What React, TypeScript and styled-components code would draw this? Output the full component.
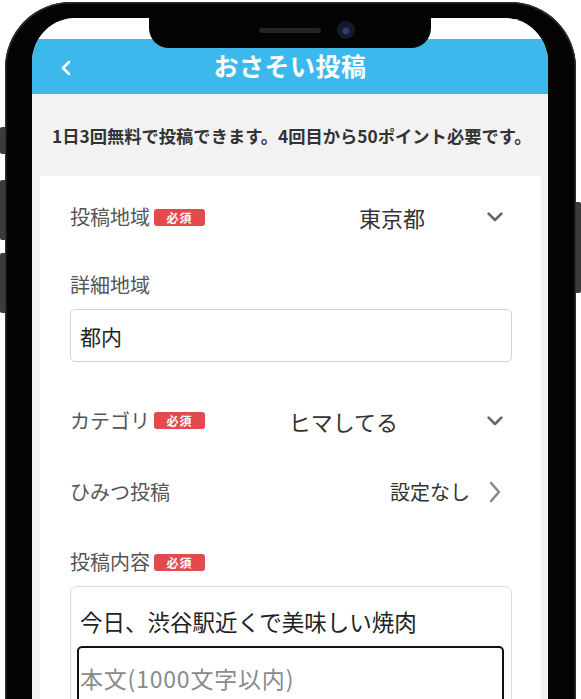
import React from "react";
import styled, { createGlobalStyle } from "styled-components";

const GlobalStyle = createGlobalStyle`
  html, body { margin: 0; padding: 0; background: #ffffff; }
  body {
    font-family: "Noto Sans CJK JP", "Noto Sans", "Liberation Sans", sans-serif;
    overflow: hidden;
  }
  * { box-sizing: border-box; }
`;

const Page = styled.div`
  position: relative;
  width: 581px;
  height: 699px;
  overflow: hidden;
  background: #ffffff;
`;

const SideButton = styled.div<{ $side: "left" | "right"; $top: number; $height: number }>`
  position: absolute;
  ${(p) => (p.$side === "left" ? "left: 0;" : "right: 0;")}
  top: ${(p) => p.$top}px;
  width: 6px;
  height: ${(p) => p.$height}px;
  background: #3b3b3b;
  border-radius: ${(p) => (p.$side === "left" ? "2px 0 0 2px" : "0 2px 2px 0")};
`;

const Device = styled.div`
  position: relative;
  margin: 2px 0 0 5px;
  width: 571px;
  height: 760px;
  padding: 16px 28px 0 27px;
  background: #040404;
  border-radius: 66px 66px 0 0;
  box-shadow: inset 0 0 0 1.5px #2c2c2c;
`;

const Screen = styled.div`
  position: relative;
  width: 516px;
  height: 740px;
  background: #ffffff;
  border-radius: 44px 44px 0 0;
  overflow: hidden;
  display: flex;
  flex-direction: column;
`;

const Notch = styled.div`
  position: absolute;
  top: 0;
  left: 50%;
  transform: translateX(-50%);
  width: 282px;
  height: 30px;
  background: #040404;
  border-radius: 0 0 20px 20px;
  display: flex;
  align-items: center;
  justify-content: flex-start;
  gap: 16px;
  padding-left: 110px;
  z-index: 2;
`;

const Speaker = styled.div`
  width: 62px;
  height: 5px;
  margin-top: -6px;
  border-radius: 3px;
  background: #222325;
`;

const Camera = styled.div`
  width: 18px;
  height: 18px;
  margin-top: -6px;
  border-radius: 50%;
  background: radial-gradient(circle at 50% 55%, #2c3f73 0 3px, #15192a 4px 100%);
`;

const StatusBar = styled.div`
  height: 21px;
  flex: none;
  background: #ffffff;
`;

const Header = styled.header`
  height: 55px;
  flex: none;
  background: #3cb8ec;
  display: grid;
  grid-template-columns: 1fr auto 1fr;
  align-items: center;
`;

const BackButton = styled.div`
  padding-left: 28px;
  display: flex;
  align-items: center;
  padding-top: 3px;
`;

const Title = styled.h1`
  margin: 0 0 3px;
  color: #ffffff;
  font-size: 25px;
  font-weight: 700;
  letter-spacing: 0.5px;
`;

const Notice = styled.div`
  height: 82px;
  flex: none;
  background: #f2f2f3;
  padding-left: 20px;
  display: flex;
  align-items: center;
  color: #333333;
  font-size: 17.3px;
  font-weight: 700;
  white-space: nowrap;
`;

const Body = styled.div`
  flex: 1;
  background: #f2f2f3;
  padding: 0 7px 0 8px;
  display: flex;
`;

const Card = styled.div`
  flex: 1;
  background: #ffffff;
  padding: 6px 29px 0 30px;
  display: flex;
  flex-direction: column;
`;

const Row = styled.div<{ $height: number }>`
  height: ${(p) => p.$height}px;
  display: flex;
  align-items: center;
  flex: none;
`;

const LabelGroup = styled.div`
  display: flex;
  align-items: center;
  gap: 4px;
`;

const Label = styled.span`
  font-size: 20px;
  color: #555555;
  line-height: 28px;
`;

const FieldLabel = styled(LabelGroup)<{ $top: number }>`
  margin-top: ${(p) => p.$top}px;
  height: 28px;
`;

const Badge = styled.span`
  width: 51px;
  height: 17px;
  border-radius: 3px;
  background: #e24a4c;
  color: #ffffff;
  font-size: 12px;
  font-weight: 700;
  display: flex;
  align-items: center;
  justify-content: center;
  letter-spacing: 1px;
`;

const Spacer = styled.div`
  flex: 1;
`;

const Value = styled.span<{ $gap: number; $size?: number }>`
  font-size: ${(p) => p.$size ?? 22}px;
  color: #333333;
  margin-right: ${(p) => p.$gap}px;
  line-height: 30px;
`;

const Icon = styled.span<{ $right: number }>`
  display: flex;
  align-items: center;
  margin-right: ${(p) => p.$right}px;
`;

const TextInput = styled.input`
  margin-top: 10px;
  height: 53px;
  width: 100%;
  border: 1.5px solid #d2d2d2;
  border-radius: 5px;
  padding: 0 0 0 9px;
  font-family: inherit;
  font-size: 21px;
  color: #222222;
  background: #ffffff;
  outline: none;
`;

const AfterInput = styled.div`
  height: 23px;
  flex: none;
`;

const ContentBox = styled.div`
  margin-top: 10px;
  border: 1.5px solid #dadada;
  border-radius: 7px;
  padding: 18px 7px 0 6px;
  flex: 1;
`;

const ContentTitle = styled.div`
  padding-left: 3px;
  font-size: 22.5px;
  line-height: 32px;
  color: #222222;
`;

const TextArea = styled.textarea`
  display: block;
  margin-top: 9px;
  width: 100%;
  height: 120px;
  border: 2.5px solid #111111;
  border-radius: 5px;
  padding: 14px 0 0 1px;
  font-family: inherit;
  font-size: 23px;
  letter-spacing: 0.8px;
  line-height: 32px;
  color: #222222;
  resize: none;
  outline: none;
  background: #ffffff;
  &::placeholder {
    color: #8a8a8a;
  }
`;

const ChevronDown = () => (
  <svg width="16" height="10" viewBox="0 0 16 10">
    <path d="M1.6 1.6 L8 8 L14.4 1.6" fill="none" stroke="#666" strokeWidth="2.6" strokeLinecap="round" strokeLinejoin="round" />
  </svg>
);

const ChevronRight = () => (
  <svg width="12" height="22" viewBox="0 0 12 22">
    <path d="M2 2 L10 11 L2 20" fill="none" stroke="#888" strokeWidth="2.6" strokeLinecap="round" strokeLinejoin="round" />
  </svg>
);

const BackIcon = () => (
  <svg width="12" height="16" viewBox="0 0 12 16">
    <path d="M9 2 L3 8 L9 14" fill="none" stroke="#fff" strokeWidth="2.6" strokeLinecap="round" strokeLinejoin="round" />
  </svg>
);

export default function App() {
  return (
    <>
      <GlobalStyle />
      <Page>
        <SideButton $side="left" $top={127} $height={27} />
        <SideButton $side="left" $top={180} $height={60} />
        <SideButton $side="left" $top={253} $height={60} />
        <SideButton $side="right" $top={202} $height={91} />
        <Device>
          <Screen>
            <Notch>
              <Speaker />
              <Camera />
            </Notch>
            <StatusBar />
            <Header>
              <BackButton>
                <BackIcon />
              </BackButton>
              <Title>おさそい投稿</Title>
              <div />
            </Header>
            <Notice>1日3回無料で投稿できます。4回目から50ポイント必要です。</Notice>
            <Body>
              <Card>
                <Row $height={70}>
                  <LabelGroup>
                    <Label>投稿地域</Label>
                    <Badge>必須</Badge>
                  </LabelGroup>
                  <Spacer />
                  <Value $gap={62}>東京都</Value>
                  <Icon $right={9}>
                    <ChevronDown />
                  </Icon>
                </Row>
                <FieldLabel $top={19}>
                  <Label>詳細地域</Label>
                </FieldLabel>
                <TextInput readOnly value="都内" />
                <AfterInput />
                <Row $height={71}>
                  <LabelGroup>
                    <Label>カテゴリ</Label>
                    <Badge>必須</Badge>
                  </LabelGroup>
                  <Spacer />
                  <Value $gap={89}>ヒマしてる</Value>
                  <Icon $right={9}>
                    <ChevronDown />
                  </Icon>
                </Row>
                <Row $height={71}>
                  <LabelGroup>
                    <Label>ひみつ投稿</Label>
                  </LabelGroup>
                  <Spacer />
                  <Value $gap={19} $size={20}>設定なし</Value>
                  <Icon $right={11}>
                    <ChevronRight />
                  </Icon>
                </Row>
                <FieldLabel $top={21}>
                  <Label>投稿内容</Label>
                  <Badge>必須</Badge>
                </FieldLabel>
                <ContentBox>
                  <ContentTitle>今日、渋谷駅近くで美味しい焼肉</ContentTitle>
                  <TextArea readOnly placeholder="本文(1000文字以内)" />
                </ContentBox>
              </Card>
            </Body>
          </Screen>
        </Device>
      </Page>
    </>
  );
}
